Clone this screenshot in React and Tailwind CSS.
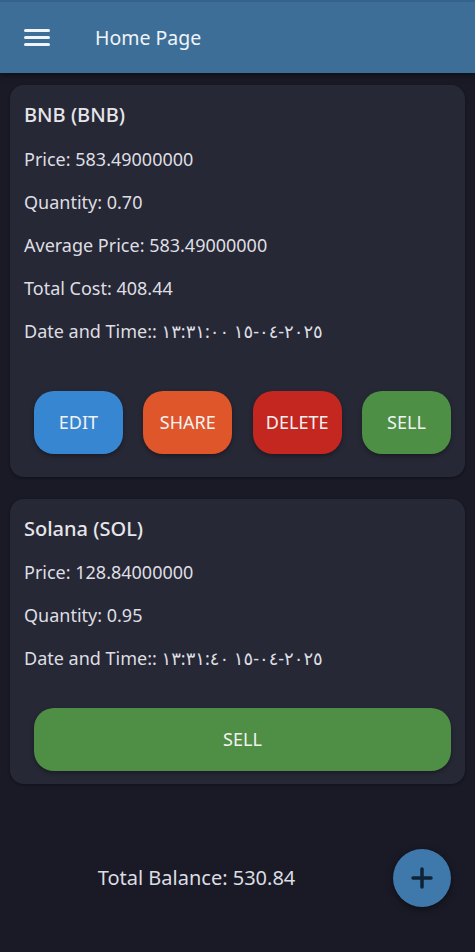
import React from "react";

const font = { fontFamily: '"Noto Sans", "DejaVu Sans", sans-serif' };

function Line({ children }) {
  return <div className="text-[18px] leading-[43px] text-[#dedee2]">{children}</div>;
}

function Btn({ label, cls, w = "w-[89px]" }) {
  return (
    <button
      className={`${w} h-[63px] rounded-[20px] ${cls} text-[18px] text-[#f2f2f2] flex items-center justify-center shadow-[0_2px_4px_rgba(0,0,0,0.35)]`}
    >
      {label}
    </button>
  );
}

export default function App() {
  return (
    <div
      className="w-[475px] h-[952px] bg-[#191a26] overflow-hidden flex flex-col"
      style={font}
    >
      <header className="h-[73px] bg-[#3d6e98] flex items-center shadow-[0_2px_6px_rgba(0,0,0,0.5)] border-t-[2px] border-[#35638b]">
        <div className="ml-[24px] w-[26px] flex flex-col gap-[4.5px]">
          <span className="block h-[2.5px] bg-[#eef4fa] rounded"></span>
          <span className="block h-[2.5px] bg-[#eef4fa] rounded"></span>
          <span className="block h-[2.5px] bg-[#eef4fa] rounded"></span>
        </div>
        <div className="ml-[45px] text-[19.5px] text-[#f0f4f8]">Home Page</div>
      </header>

      <div className="mx-[10px] mt-[12px] rounded-[14px] bg-[#272836] px-[14px] pt-[16px] pb-[23px] shadow-[0_1px_3px_rgba(0,0,0,0.4)]">
        <div className="text-[20px] leading-[28px] font-medium text-[#e6e6ea] mb-[8.5px]">BNB (BNB)</div>
        <Line>Price: 583.49000000</Line>
        <Line>Quantity: 0.70</Line>
        <Line>Average Price: 583.49000000</Line>
        <Line>Total Cost: 408.44</Line>
        <Line>
          Date and Time:: <bdo dir="ltr">١٣:٣١:٠٠ ١٥-٠٤-٢٠٢٥</bdo>
        </Line>
        <div className="mt-[38px] pl-[10px] flex justify-between">
          <Btn label="EDIT" cls="bg-[#3786d2]" />
          <Btn label="SHARE" cls="bg-[#e0562b]" />
          <Btn label="DELETE" cls="bg-[#c42720]" />
          <Btn label="SELL" cls="bg-[#4c8f45]" />
        </div>
      </div>

      <div className="mx-[10px] mt-[22px] rounded-[14px] bg-[#272836] px-[14px] pt-[16px] pb-[13px] shadow-[0_1px_3px_rgba(0,0,0,0.4)]">
        <div className="text-[20px] leading-[28px] font-medium text-[#e6e6ea] mb-[8.5px]">Solana (SOL)</div>
        <Line>Price: 128.84000000</Line>
        <Line>Quantity: 0.95</Line>
        <Line>
          Date and Time:: <bdo dir="ltr">١٣:٣١:٤٠ ١٥-٠٤-٢٠٢٥</bdo>
        </Line>
        <div className="mt-[27.5px] pl-[10px] flex">
          <Btn label="SELL" cls="bg-[#4f8e45]" w="w-full" />
        </div>
      </div>

      <div className="mt-[65px] flex items-center h-[58px]">
        <div className="flex-1 text-center text-[20px] text-[#dcdde2]">Total Balance: 530.84</div>
        <button className="mr-[24px] w-[58px] h-[58px] rounded-full bg-[#3f78ab] flex items-center justify-center shadow-[0_2px_6px_rgba(0,0,0,0.5)]">
          <svg width="24" height="24" viewBox="0 0 24 24">
            <path d="M12 3v18M3 12h18" stroke="#0f2336" strokeWidth="3.5" strokeLinecap="round" />
          </svg>
        </button>
      </div>
    </div>
  );
}
